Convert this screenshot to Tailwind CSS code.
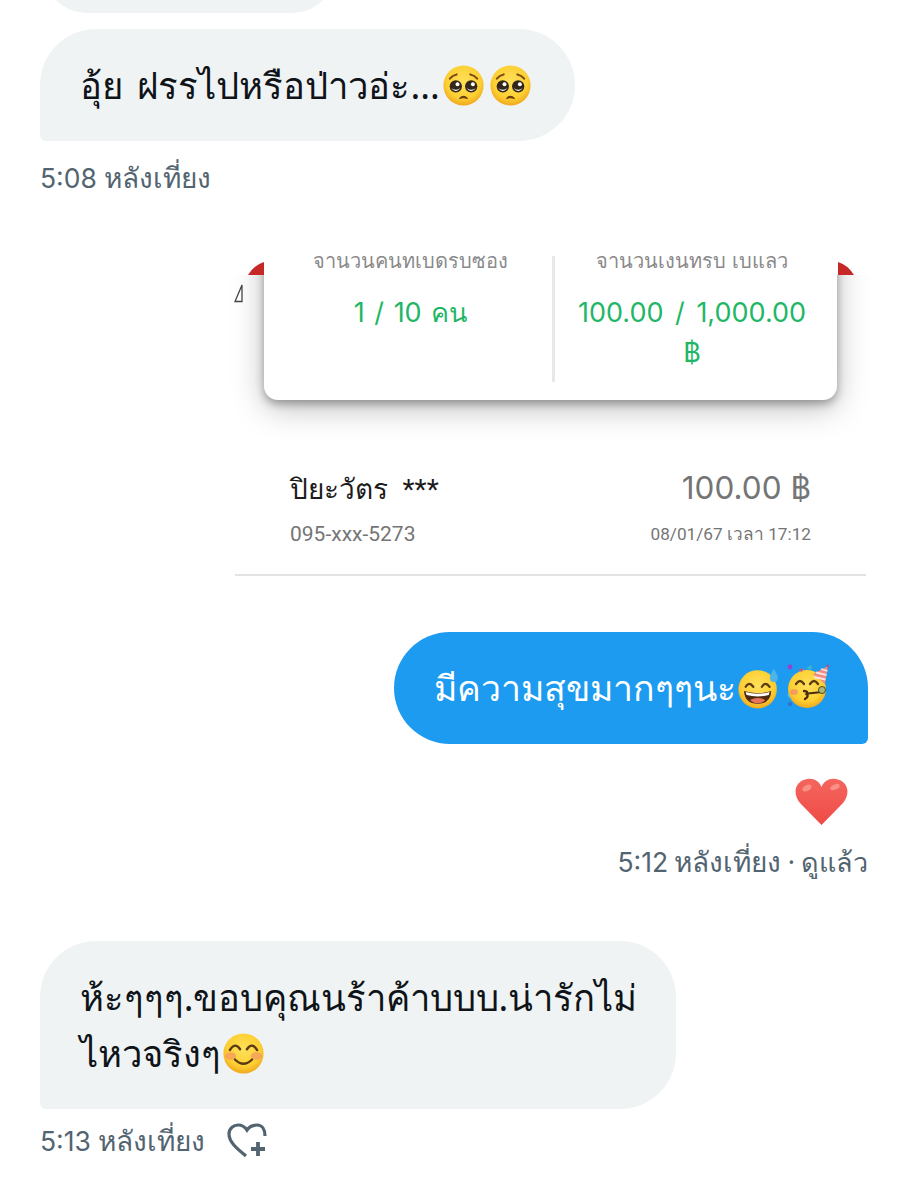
<!DOCTYPE html>
<html lang="th">
<head>
<meta charset="utf-8">
<script src="https://cdn.jsdelivr.net/npm/@tailwindcss/browser@4"></script>
</head>
<body class="bg-white overflow-hidden font-['Noto_Sans','DejaVu_Sans',sans-serif]">
<svg class="absolute w-0 h-0" aria-hidden="true">
  <defs>
    <radialGradient id="face" cx="50%" cy="40%" r="60%">
      <stop offset="0" stop-color="#fee05a"/><stop offset="0.7" stop-color="#fdd033"/><stop offset="1" stop-color="#f0a81e"/>
    </radialGradient>
    <linearGradient id="redheart" x1="0" y1="0" x2="0" y2="1">
      <stop offset="0" stop-color="#f4665e"/><stop offset="1" stop-color="#ee4a44"/>
    </linearGradient>
    <g id="pleading">
      <circle cx="24" cy="24" r="23.5" fill="url(#face)"/>
      <path d="M8 16 Q11 12 16 11" fill="none" stroke="#7a4a12" stroke-width="2.4" stroke-linecap="round"/>
      <path d="M40 16 Q37 12 32 11" fill="none" stroke="#7a4a12" stroke-width="2.4" stroke-linecap="round"/>
      <circle cx="15" cy="25" r="7.2" fill="#33261a"/><circle cx="33" cy="25" r="7.2" fill="#33261a"/>
      <path d="M9.6 25 A5.4 5.4 0 0 0 20.4 25 A5.4 4 0 0 1 9.6 25Z" fill="#fff"/>
      <path d="M27.6 25 A5.4 5.4 0 0 0 38.4 25 A5.4 4 0 0 1 27.6 25Z" fill="#fff"/>
      <circle cx="17" cy="22.5" r="2.3" fill="#fff"/><circle cx="35" cy="22.5" r="2.3" fill="#fff"/>
      <path d="M19.5 39 Q24 34.5 28.5 39 Q24 37.5 19.5 39Z" fill="#6b3d10" stroke="#6b3d10" stroke-width="1.4" stroke-linejoin="round"/>
    </g>
  </defs>
</svg>
<div class="w-[909px] h-[1200px] overflow-hidden flex flex-col pl-[40px] pr-[41px]">
  <div class="w-[293px] h-[60px] mt-[-47px] ml-[3px] rounded-b-[44px] bg-[#eff3f4] shrink-0"></div>

  <div class="mt-[16px] w-[535px] h-[112px] rounded-[56px] rounded-bl-[6px] bg-[#eff3f4] flex items-center pl-[40px] text-[36.5px] text-[#0f1419] shrink-0 [word-spacing:5px]">
    <span>อุ้ย ฝรรไปหรือป่าวอ่ะ...</span><svg class="w-[41px] h-[41px] ml-[3px] shrink-0" viewBox="0 0 48 48"><use href="#pleading"/></svg><svg class="w-[41px] h-[41px] ml-[6px] shrink-0" viewBox="0 0 48 48"><use href="#pleading"/></svg>
  </div>
  <div class="mt-[18px] h-[36px] text-[28px] leading-[36px] text-[#536471]"><span class="font-['Inter'] text-[26.5px]">5:08</span> หลังเที่ยง</div>

  <div class="mt-[34px] ml-[195px] w-[631px]">
    <div class="relative mx-[29px] h-[171px] flex">
      <div class="absolute top-[46px] bottom-[-50px] left-[-50px] right-[-50px] overflow-hidden">
        <div class="absolute top-[-60px] bottom-[50px] left-[50px] right-[50px] bg-white rounded-[14px] shadow-[0_4px_8px_rgba(0,0,0,0.30),0_8px_32px_rgba(0,0,0,0.26)]"></div>
      </div>
      <svg class="absolute left-[-16px] top-[33px] w-[16px] h-[13px]" viewBox="0 0 16 13"><path d="M0 13 Q6 3 16 0 V13Z" fill="#c62828"/></svg>
      <svg class="absolute right-[-17px] top-[33px] w-[16px] h-[13px]" viewBox="0 0 16 13"><path d="M16 13 Q10 3 0 0 V13Z" fill="#c62828"/></svg>
      <svg class="absolute left-[-30px] top-[55px] w-[11px] h-[19px]" viewBox="0 0 11 19"><path d="M8 1 L1 17.5 H8 Z" fill="none" stroke="#444" stroke-width="1.3"/></svg>
      <div class="relative w-[288px] pl-[5px] flex flex-col items-center pt-[19px]">
        <div class="text-[20px] leading-[26px] text-[#8a8a8a]">จานวนคนทเบดรบซอง</div>
        <div class="mt-[19px] h-[40px] text-[27px] leading-[40px] text-[#1fb767] font-['Inter','Noto_Sans',sans-serif] [word-spacing:2px]">1 / 10 คน</div>
      </div>
      <div class="relative w-[3px] h-[126px] mt-[27px] bg-[#e8e8e8]"></div>
      <div class="relative flex-1 pr-[8px] flex flex-col items-center pt-[19px]">
        <div class="text-[20px] leading-[26px] text-[#8a8a8a]">จานวนเงนทรบ เบแลว</div>
        <div class="mt-[19px] text-[27px] leading-[40px] text-[#1fb767] text-center font-['Inter','Noto_Sans',sans-serif] [word-spacing:4px]">100.00 / 1,000.00<br>฿</div>
      </div>
    </div>
    <div class="relative flex justify-between mx-[55px] mt-[69px]">
      <div class="text-[28px] leading-[38px] text-[#1c1c1c]">ปิยะวัตร&nbsp; <span class="font-['Roboto'] text-[28px]">***</span></div>
      <div class="text-[31.5px] leading-[38px] text-[#757575] font-['Inter','Noto_Sans',sans-serif]">100.00 ฿</div>
    </div>
    <div class="flex justify-between items-center mx-[55px] mt-[12px] h-[28px] font-['Roboto','Noto_Sans',sans-serif] text-[#757575]">
      <div class="text-[21px]">095-xxx-5273</div>
      <div class="text-[17.2px]">08/01/67 เวลา 17:12</div>
    </div>
    <div class="h-[2px] bg-[#e3e3e3] mt-[25px]"></div>
  </div>

  <div class="mt-[56px] self-end w-[474px] h-[112px] rounded-[56px] rounded-br-[6px] bg-[#1d9bf0] text-white text-[35.6px] flex items-center pl-[40px] shrink-0">
    <span>มีความสุขมากๆๆนะ</span>
    <svg class="w-[41px] h-[41px] ml-[2px] shrink-0" viewBox="0 0 48 48">
      <circle cx="23" cy="25" r="22.5" fill="url(#face)"/>
      <path d="M9 22 Q13 15 18 22" fill="none" stroke="#5b3a12" stroke-width="2.6" stroke-linecap="round"/>
      <path d="M28 22 Q32 15 37 22" fill="none" stroke="#5b3a12" stroke-width="2.6" stroke-linecap="round"/>
      <path d="M7 27 Q23 32 39 27 Q38 42 23 42 Q8 42 7 27Z" fill="#4e2a12"/>
      <path d="M9 28 Q23 32 37 28 L36 31.5 Q23 35 10 31.5Z" fill="#fff"/>
      <path d="M14 37.5 Q23 32.5 32 37.5 Q28 41.5 23 41.5 Q18 41.5 14 37.5Z" fill="#e8735a"/>
      <path d="M42 1 Q37 9 37.5 12 A4.5 4.5 0 0 0 46.5 12 Q47 9 42 1Z" fill="#4fb3e8"/>
    </svg>
    <svg class="w-[42px] h-[45px] ml-[8px] shrink-0 mt-[-4px]" viewBox="0 0 42 45">
      <circle cx="20" cy="25" r="19" fill="url(#face)"/>
      <path d="M26 10 L41 2 L38 20 Z" fill="#f28b82"/>
      <path d="M29 8.5 L39.5 11 M27 13 L38.5 15.5 M34 5 L40.5 7" stroke="#fbe3df" stroke-width="1.8"/>
      <circle cx="41" cy="2" r="1.6" fill="#a8558c"/>
      <circle cx="3" cy="3" r="2.4" fill="#9c3fd0"/>
      <path d="M11 6 L16 4 L15 8Z" fill="#d94f70"/>
      <path d="M19 4 L25 1 L24 6Z" fill="#3fb6c9"/>
      <path d="M1 30 L3 34" stroke="#4fc3e8" stroke-width="1.6"/>
      <circle cx="3" cy="40" r="2" fill="#2f6fd0"/>
      <ellipse cx="7" cy="28" rx="4" ry="3" fill="#f08a6a" opacity=".7"/>
      <path d="M9 20 Q13 14 17 20" fill="none" stroke="#5b3a12" stroke-width="2.3" stroke-linecap="round"/>
      <path d="M23 20 Q27 14 31 20" fill="none" stroke="#5b3a12" stroke-width="2.3" stroke-linecap="round"/>
      <path d="M17 27 Q22 27.5 19.5 30 Q22.5 32 18 35" fill="none" stroke="#4a2a10" stroke-width="2.3" stroke-linecap="round"/>
      <path d="M21 29.5 L35 28" stroke="#4a2a10" stroke-width="1.8"/>
      <circle cx="35" cy="26" r="3.5" fill="#a9b97a" stroke="#4a4a20" stroke-width="1"/>
    </svg>
  </div>
  <svg class="self-end mt-[34px] mr-[20px] w-[53px] h-[47px] shrink-0" viewBox="0 0 53 47">
    <path d="M26.5 47 L5 25 C-3 15 0 3 12 1 C19 0 24 3 26.5 9 C29 3 34 0 41 1 C53 3 56 15 48 25Z" fill="url(#redheart)"/>
    <ellipse cx="12" cy="10" rx="5" ry="3" fill="#fb8f86" transform="rotate(-30 12 10)"/>
    <ellipse cx="40" cy="9" rx="5" ry="2.6" fill="#fb8f86" transform="rotate(-25 40 9)"/>
  </svg>
  <div class="h-[36px] text-[28px] leading-[36px] text-[#536471] self-end mt-[18px] [word-spacing:-1px]"><span class="font-['Inter'] text-[26.5px]">5:12</span> หลังเที่ยง <span class="text-[27px]">· ดูแล้ว</span></div>

  <div class="mt-[62px] w-[636px] h-[168px] rounded-[56px] rounded-bl-[6px] bg-[#eff3f4] pl-[40px] pr-[30px] pt-[28px] text-[36.4px] tracking-[-0.06px] leading-[56px] text-[#0f1419] shrink-0">
    ห้ะๆๆๆ.ขอบคุณนร้าค้าบบบ.น่ารักไม่<br>ไหวจริงๆ<svg class="inline-block w-[41px] h-[41px] ml-[2px] align-[-7px]" viewBox="0 0 48 48">
      <circle cx="24" cy="24" r="23.5" fill="url(#face)"/>
      <ellipse cx="9" cy="27" rx="6.5" ry="4.5" fill="#f2916a" opacity=".65"/>
      <ellipse cx="39" cy="27" rx="6.5" ry="4.5" fill="#f2916a" opacity=".65"/>
      <path d="M8 20 Q14 10 20 19" fill="none" stroke="#5b3a12" stroke-width="2.8" stroke-linecap="round"/>
      <path d="M28 19 Q34 10 40 20" fill="none" stroke="#5b3a12" stroke-width="2.8" stroke-linecap="round"/>
      <path d="M14 31 Q24 41 34 31" fill="none" stroke="#5b3a12" stroke-width="2.8" stroke-linecap="round"/>
    </svg>
  </div>
  <div class="mt-[13px] flex items-center">
    <span class="h-[36px] text-[28px] leading-[36px] text-[#536471]"><span class="font-['Inter'] text-[26.5px]">5:13</span> หลังเที่ยง</span>
    <svg class="ml-[22px] w-[40px] h-[35px] shrink-0" viewBox="0 0 40 35" fill="none" stroke="#536471" stroke-width="3.2">
      <path d="M19 33 C12 27 2 20 2 11 C2 5 7 2 11 2 C15 2 18 4 20 7 C22 4 26 2 30 2 C35 2 38 6 38 13"/>
      <path d="M31 19v14M24 26h14" stroke-width="3.8"/>
    </svg>
  </div>
</div>
</body>
</html>
